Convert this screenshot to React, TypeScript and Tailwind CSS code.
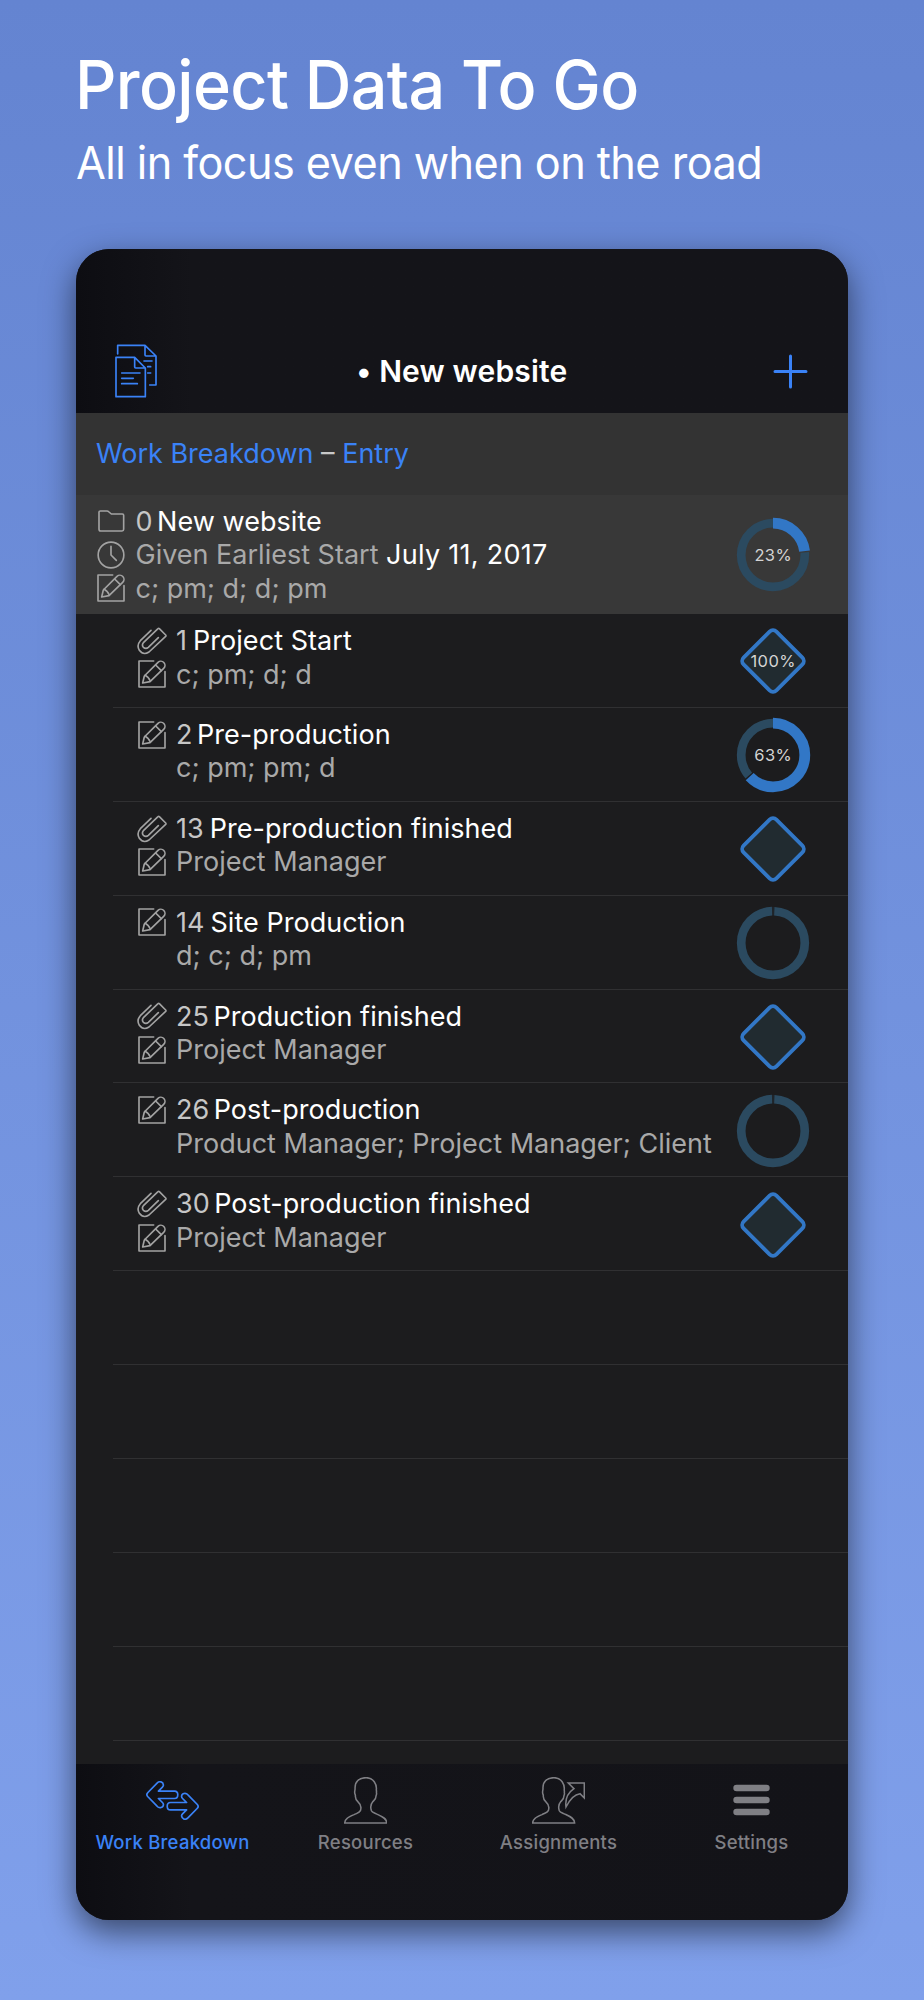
import type { ReactNode } from 'react'

type IconName = 'folder' | 'clock' | 'edit' | 'clip'

interface Line {
  icon?: IconName
  text: ReactNode
}

interface Task {
  id: number
  name: string
  people: string
  milestone?: boolean
  percent?: number
}

const tasks: Task[] = [
  { id: 1, name: 'Project Start', people: 'c; pm; d; d', milestone: true, percent: 100 },
  { id: 2, name: 'Pre-production', people: 'c; pm; pm; d', percent: 63 },
  { id: 13, name: 'Pre-production finished', people: 'Project Manager', milestone: true },
  { id: 14, name: 'Site Production', people: 'd; c; d; pm' },
  { id: 25, name: 'Production finished', people: 'Project Manager', milestone: true },
  { id: 26, name: 'Post-production', people: 'Product Manager; Project Manager; Client' },
  { id: 30, name: 'Post-production finished', people: 'Project Manager', milestone: true },
]

const PERSON =
  'M66 2C45 2 32 14 33 34C33 42 31 43 32 48C32 52 34 52 34 56C33 66 36 70 43 76C50 82 52 92 49 101C46 107 40 108 30 113C12 121 2 126 2 138H128C128 126 118 120 100 112C90 107 84 106 82 101C79 92 79 82 86 74C92 68 96 66 96 56C98 52 98 50 97 46C98 42 96 40 97 34C97 24 90 2 66 2Z'

function RowIcon({ name }: { name: IconName }) {
  const common = { fill: 'none', stroke: '#a3a3a3', strokeWidth: 4.9, strokeLinecap: 'round', strokeLinejoin: 'round' } as const
  if (name === 'folder') {
    return (
      <svg width="27" height="22" viewBox="0 0 81 66" {...common}>
        <path d="M3 6q0-3 4-3h20q3 0 6 3l7 6h33q4 0 4 4v42q0 5-5 5H8q-5 0-5-5z" />
      </svg>
    )
  }
  if (name === 'clock') {
    return (
      <svg width="28" height="28" viewBox="0 0 84 84" {...common}>
        <circle cx="42" cy="42" r="38.5" />
        <path d="M42 16V42L58 58" />
      </svg>
    )
  }
  if (name === 'clip') {
    return (
      <svg width="30" height="28" viewBox="0 0 90 84" {...common}>
        <path d="M42 10L10 41Q-2 55 7 70Q19 86 36 75L86 28Q88 26 86 24L67 5Q65 3 63 5L20 46Q13 54 19 61Q27 67 34 61L64 32" />
      </svg>
    )
  }
  return (
    <svg width="28" height="28" viewBox="0 0 84 84" {...common}>
      <path d="M47 3H3V81H81V35" />
      <path d="M14 69L19 48L60 7A12 12 0 0 1 77 25L36 65Z" />
      <path d="M21 46Q31 50 37 63M53 15L70 32" />
    </svg>
  )
}

function Ring({ percent = 0 }: { percent?: number }) {
  const c = 2 * Math.PI * 31.8
  const done = (c * percent) / 100
  return (
    <svg width="76" height="76" viewBox="0 0 76 76" className="shrink-0">
      <g transform="rotate(-90 38 38)" fill="none">
        <circle cx="38" cy="38" r="31.8" stroke="#2b4a60" strokeWidth="8.7"
          strokeDasharray={`${c - done - (percent ? 1.2 : 2.6)} ${c}`} strokeDashoffset={-(done + 1.3)} />
        {percent === 0 && <path d="M65.5 38H74" stroke="#26333d" strokeWidth="0.8" />}
        {percent > 0 && <circle cx="38" cy="38" r="31.8" stroke="#3277c6" strokeWidth="10.8" strokeDasharray={`${done} ${c}`} />}
      </g>
      {percent > 0 && <text x="38.2" y="44.3" textAnchor="middle" fontSize="16.5" letterSpacing="0.35" fill="#d4d4d4">{percent}%</text>}
    </svg>
  )
}

function Diamond({ percent }: { percent?: number }) {
  return (
    <svg width="76" height="76" viewBox="0 0 76 76" className="shrink-0">
      <rect x="14.8" y="14.8" width="46.4" height="46.4" rx="4.8" transform="rotate(45 38 38)" fill="#212b30" stroke="#3277c6" strokeWidth="3.8" />
      {percent && <text x="38.2" y="44.3" textAnchor="middle" fontSize="16.5" letterSpacing="0.45" fill="#d4d4d4">{percent}%</text>}
    </svg>
  )
}

function Lines({ lines }: { lines: Line[] }) {
  return (
    <div className="flex-1 pt-2.5 text-[27px] leading-[33.6px] whitespace-nowrap text-[#a9a9a9]">
      {lines.map((l, i) => (
        <div key={i} className="flex h-[33.6px] items-center">
          <span className="mr-[9.5px] flex w-[30px] shrink-0 justify-center">{l.icon && <RowIcon name={l.icon} />}</span>
          <p>{l.text}</p>
        </div>
      ))}
    </div>
  )
}

function Title({ id, name }: { id: number; name: string }) {
  return (
    <>
      <span className={`text-[#c6c6c6] ${id > 0 && id < 20 && id !== 2 ? 'mr-[6px]' : 'mr-[4.5px]'}`}>{id}</span>
      <span className="tracking-[0.05px] text-white">{name}</span>
    </>
  )
}

function TaskRow({ task }: { task: Task }) {
  // summary tasks keep the note icon on the first line and nothing on the second
  const lines: Line[] = [
    { icon: task.milestone ? 'clip' : 'edit', text: <Title id={task.id} name={task.name} /> },
    { icon: task.milestone ? 'edit' : undefined, text: task.people },
  ]
  return (
    <div className="ml-[37px] flex h-[93.9px] shrink-0 border-b border-[#303032] pr-[37px] pl-[23.5px]">
      <Lines lines={lines} />
      <div className="flex items-center pt-[1.5px]">
        {task.milestone ? <Diamond percent={task.percent} /> : <Ring percent={task.percent} />}
      </div>
    </div>
  )
}

function Tab({ label, active, children }: { label: string; active?: boolean; children: ReactNode }) {
  return (
    <div className={`flex flex-1 flex-col items-center pt-2 ${active ? 'text-[#3a82f7]' : 'text-[#7f7f84]'}`}>
      <div className="flex h-14 items-center">{children}</div>
      <span className="text-[18.5px] leading-7 font-medium tracking-[0.24px]">{label}</span>
    </div>
  )
}

function App() {
  return (
    <div className="flex h-[2000px] w-[924px] flex-col bg-linear-to-b from-[#6484d1] to-[#80a0eb] px-[76px] font-[Inter,sans-serif]">
      <header className="h-[249px] shrink-0 whitespace-nowrap text-white">
        <h1 className="-ml-[1.5px] origin-left scale-x-[0.965] pt-[45px] text-[67px] leading-20 font-medium tracking-[-0.69px]">Project Data To Go</h1>
        <p className="origin-left scale-x-[0.95] pt-2 text-[45.5px] leading-[60px] tracking-[-0.58px]">All in focus even when on the road</p>
      </header>

      <main className="flex h-[1670.5px] flex-col overflow-hidden rounded-[33px] bg-[#1c1c1e] shadow-[0_12px_32px_rgba(0,0,0,0.55)]">
        <div className="flex h-[164px] shrink-0 items-center justify-between bg-linear-to-r from-[#0d0d12] via-[#141419] via-15% to-[#141419] pt-[80px] pr-[40px] pl-[38.5px]">
          <svg width="42" height="54" viewBox="43 27 126 162" fill="none" stroke="#3a82f7" strokeWidth="5" strokeLinecap="round" strokeLinejoin="round">
            <path d="M46 67H102L134 99V185H46ZM102 67V96Q102 99 105 99H134" />
            <path d="M51 57V31H133L166 63V150H147M133 31V60Q133 63 136 63H166" />
            <path d="M63 114H118M63 130H98M63 146H110M130 78H154M141 95H150M141 114H150" />
          </svg>
          <h2 className="mr-1.5 text-[30px] leading-9 font-semibold tracking-[0.16px] text-white">• New website</h2>
          <svg width="35" height="35" viewBox="0 0 35 35" stroke="#3a82f7" strokeWidth="3" strokeLinecap="round">
            <path d="M17.5 2V33M2 17.5H33" />
          </svg>
        </div>

        <div className="flex h-[81.5px] shrink-0 items-center bg-[#333333] pt-px pl-5 text-[27px] text-[#3a82f7]">
          <p>Work Breakdown <span className="text-[#c9c9c9]">–</span> Entry</p>
        </div>

        <div className="flex h-[119.5px] shrink-0 bg-[#383838] pr-[37px] pl-5">
          <Lines
            lines={[
              { icon: 'folder', text: <Title id={0} name="New website" /> },
              { icon: 'clock', text: <>Given Earliest Start <span className="tracking-[0.28px] text-white">July 11, 2017</span></> },
              { icon: 'edit', text: 'c; pm; d; d; pm' },
            ]}
          />
          <div className="flex items-center pt-px"><Ring percent={23} /></div>
        </div>

        <div className="flex flex-1 flex-col overflow-hidden">
          {tasks.map((t) => <TaskRow key={t.id} task={t} />)}
          {[0, 1, 2, 3, 4].map((i) => (
            <div key={i} className="ml-[37px] h-[93.9px] shrink-0 border-b border-[#303032]" />
          ))}
        </div>

        <nav className="flex h-[155.5px] shrink-0 bg-linear-to-r from-[#0d0d12] via-[#141419] via-15% to-[#131318]">
          <Tab label="Work Breakdown" active>
            <svg width="53" height="39" viewBox="0 0 158 116" fill="none" stroke="currentColor" strokeWidth="5" strokeLinejoin="round">
              <path id="arrow" d="M5 35Q0 40 5 46L33 75C40 83 52 79 52 70Q52 67 49 64L37 52H85C98 52 98 30 85 30H37L49 18Q52 15 52 12C51 2 40-1 33 6Z" />
              <use href="#arrow" transform="rotate(180 79 58)" />
            </svg>
          </Tab>
          <Tab label="Resources">
            <svg width="43.5" height="47" viewBox="0 0 130 141" fill="none" stroke="currentColor" strokeWidth="4.6">
              <path d={PERSON} />
            </svg>
          </Tab>
          <Tab label="Assignments">
            <svg width="53.3" height="47" viewBox="0 0 160 141" fill="none" stroke="currentColor" strokeWidth="4.6">
              <path d={PERSON} />
              <path d="M109 18H157V63L144 50C127 52 112 70 102 90C99 66 108 47 126 35Z" />
            </svg>
          </Tab>
          <Tab label="Settings">
            <svg width="37" height="32" viewBox="0 0 37 32" fill="currentColor">
              <rect x="0.3" y="0.8" width="36.4" height="6.4" rx="3.2" />
              <rect x="0.3" y="12.8" width="36.4" height="6.4" rx="3.2" />
              <rect x="0.3" y="24.8" width="36.4" height="6.4" rx="3.2" />
            </svg>
          </Tab>
        </nav>
      </main>
    </div>
  )
}

export default App
